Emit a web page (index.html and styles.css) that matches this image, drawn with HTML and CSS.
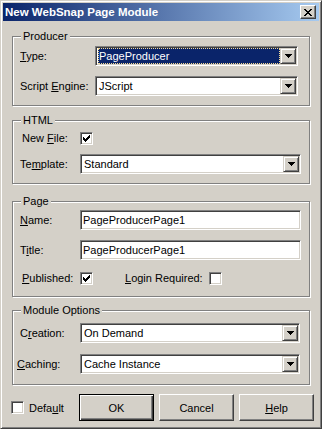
FILE: index.html
```html
<!DOCTYPE html>
<html>
<head>
    <title>New WebSnap Page Module</title>
    <link rel="stylesheet" href="styles.css">
</head>
<body>
    <div class="window">
        <div class="titlebar">
            <span class="title">New WebSnap Page Module</span>
            <span class="close-button">
                <svg width="8" height="7" viewBox="0 0 8 7"><path fill="#000" d="M0 0h2v1H0z M6 0h2v1H6z M1 1h2v1H1z M5 1h2v1H5z M2 2h4v1H2z M3 3h2v1H3z M2 4h4v1H2z M1 5h2v1H1z M5 5h2v1H5z M0 6h2v1H0z M6 6h2v1H6z"/></svg>
            </span>
        </div>

        <div class="content">
            <!-- Producer -->
            <div class="group group-producer">
                <span class="group-title">Producer</span>
                <div class="rows">
                    <div class="row">
                        <span class="label"><u>T</u>ype:</span>
                        <div class="combo">
                            <span class="combo-value"><span class="combo-selected">PageProducer</span></span>
                            <span class="combo-button"><svg width="7" height="4" viewBox="0 0 7 4"><path fill="#000" d="M0 0h7v1h-1v1h-1v1h-1v1h-1v-1h-1v-1h-1v-1h-1z"/></svg></span>
                        </div>
                    </div>
                    <div class="row">
                        <span class="label">Script <u>E</u>ngine:</span>
                        <div class="combo">
                            <span class="combo-value">JScript</span>
                            <span class="combo-button"><svg width="7" height="4" viewBox="0 0 7 4"><path fill="#000" d="M0 0h7v1h-1v1h-1v1h-1v1h-1v-1h-1v-1h-1v-1h-1z"/></svg></span>
                        </div>
                    </div>
                </div>
            </div>

            <!-- HTML -->
            <div class="group group-html">
                <span class="group-title">HTML</span>
                <div class="rows">
                    <div class="row">
                        <span class="label label-shift">New <u>F</u>ile:</span>
                        <span class="checkbox"><svg width="7" height="7" viewBox="0 0 7 7"><path fill="#000" d="M0 2v3h1v1h1v1h1v-1h1v-1h1v-1h1v-1h1v-3h-1v1h-1v1h-1v1h-1v1h-1v-1h-1v-1z"/></svg></span>
                    </div>
                    <div class="row">
                        <span class="label">Te<u>m</u>plate:</span>
                        <div class="combo combo-wide">
                            <span class="combo-value">Standard</span>
                            <span class="combo-button"><svg width="7" height="4" viewBox="0 0 7 4"><path fill="#000" d="M0 0h7v1h-1v1h-1v1h-1v1h-1v-1h-1v-1h-1v-1h-1z"/></svg></span>
                        </div>
                    </div>
                </div>
            </div>

            <!-- Page -->
            <div class="group group-page">
                <span class="group-title">Page</span>
                <div class="rows">
                    <div class="row">
                        <span class="label"><u>N</u>ame:</span>
                        <div class="field">PageProducerPage1</div>
                    </div>
                    <div class="row">
                        <span class="label">T<u>i</u>tle:</span>
                        <div class="field">PageProducerPage1</div>
                    </div>
                    <div class="row row-checks">
                        <span class="label label-shift"><u>P</u>ublished:</span>
                        <span class="checkbox"><svg width="7" height="7" viewBox="0 0 7 7"><path fill="#000" d="M0 2v3h1v1h1v1h1v-1h1v-1h1v-1h1v-1h1v-3h-1v1h-1v1h-1v1h-1v1h-1v-1h-1v-1z"/></svg></span>
                        <span class="login-label"><u>L</u>ogin Required:</span>
                        <span class="checkbox"></span>
                    </div>
                </div>
            </div>

            <!-- Module Options -->
            <div class="group group-module">
                <span class="group-title">Module Options</span>
                <div class="rows">
                    <div class="row">
                        <span class="label">C<u>r</u>eation:</span>
                        <div class="combo">
                            <span class="combo-value">On Demand</span>
                            <span class="combo-button"><svg width="7" height="4" viewBox="0 0 7 4"><path fill="#000" d="M0 0h7v1h-1v1h-1v1h-1v1h-1v-1h-1v-1h-1v-1h-1z"/></svg></span>
                        </div>
                    </div>
                    <div class="row">
                        <span class="label label-back"><u>C</u>aching:</span>
                        <div class="combo">
                            <span class="combo-value">Cache Instance</span>
                            <span class="combo-button"><svg width="7" height="4" viewBox="0 0 7 4"><path fill="#000" d="M0 0h7v1h-1v1h-1v1h-1v1h-1v-1h-1v-1h-1v-1h-1z"/></svg></span>
                        </div>
                    </div>
                </div>
            </div>
        </div>

        <div class="footer">
            <div class="default-option">
                <span class="checkbox"></span>
                <span>Defa<u>u</u>lt</span>
            </div>
            <div class="buttons">
                <span class="button button-default">OK</span>
                <span class="button">Cancel</span>
                <span class="button"><u>H</u>elp</span>
            </div>
        </div>
    </div>
</body>
</html>
```

FILE: styles.css
```css
body {
    font-family: "Liberation Sans", Arial, sans-serif;
    font-size: 11px;
    color: #000000;
    margin: 0;
    background-color: #d4d0c8;
}

.window {
    box-sizing: border-box;
    width: 322px;
    height: 429px;
    padding: 2px;
    border: 1px solid;
    border-color: #d4d0c8 #404040 #404040 #d4d0c8;
    box-shadow: inset 1px 1px 0 #ffffff, inset -1px -1px 0 #808080;
    background-color: #d4d0c8;
    display: flex;
    flex-direction: column;
}

.titlebar {
    height: 18px;
    padding: 0 3px 0 2px;
    display: flex;
    align-items: center;
    background: linear-gradient(to right, #0a246a, #a6caf0);
}

.title {
    flex: 1;
    color: #ffffff;
    font-weight: bold;
    font-size: 11.5px;
    white-space: nowrap;
}

.close-button {
    box-sizing: border-box;
    width: 16px;
    height: 14px;
    border: 1px solid;
    border-color: #ffffff #404040 #404040 #ffffff;
    box-shadow: inset -1px -1px 0 #808080;
    background-color: #d4d0c8;
    display: flex;
    align-items: center;
    justify-content: center;
}

.content {
    padding-left: 9px;
    display: flex;
    flex-direction: column;
}

/* group boxes with the etched frame */
.group {
    box-sizing: border-box;
    width: 298px;
    padding: 0 7px;
    border: 1px solid #808080;
    box-shadow: 1px 1px 0 #ffffff, inset 1px 1px 0 #ffffff;
    display: flex;
    flex-direction: column;
}

.group-title {
    align-self: flex-start;
    line-height: 14px;
    margin: -8px 0 0 1px;
    padding: 0 2px;
    background-color: #d4d0c8;
    white-space: nowrap;
}

.rows {
    display: flex;
    flex-direction: column;
    gap: 10px;
}

.group-producer {
    margin-top: 15px;
}

.group-producer .rows {
    padding: 3px 0 9px;
}

.group-html {
    margin-top: 14px;
}

.group-html .rows {
    padding: 1px 0 9px;
    gap: 6px;
}

.group-page {
    margin-top: 17px;
}

.group-page .rows {
    padding: 2px 0 8px;
}

.group-module {
    margin-top: 13px;
}

.group-module .rows {
    padding: 6px 0 10px;
    gap: 11px;
}

.row {
    height: 20px;
    display: flex;
    align-items: center;
}

.row-checks {
    margin-top: -2px;
}

.label {
    width: 60px;
    flex: none;
    white-space: nowrap;
}

.group-producer .label {
    width: 75px;
}

.label-shift {
    box-sizing: border-box;
    padding-left: 2px;
}

.label-back {
    margin-left: -3px;
    width: 63px;
}

/* sunken fields */
.combo,
.field {
    box-sizing: border-box;
    width: 220px;
    height: 20px;
    padding: 1px;
    border: 1px solid;
    border-color: #808080 #ffffff #ffffff #808080;
    box-shadow: inset 1px 1px 0 #404040, inset -1px -1px 0 #d4d0c8;
    background-color: #ffffff;
    display: flex;
    align-items: center;
}

.group-producer .combo {
    width: 203px;
}

.combo-wide {
    width: 221px;
}

.field {
    width: 221px;
    padding-left: 2px;
    white-space: nowrap;
}

.combo-value {
    flex: 1;
    align-self: stretch;
    display: flex;
    align-items: center;
    padding-left: 2px;
    white-space: nowrap;
}

.combo-selected {
    flex: 1;
    align-self: stretch;
    display: flex;
    align-items: center;
    margin-left: -1px;
    padding-left: 1px;
    background-color: #0a246a;
    color: #ffffff;
    outline: 1px dotted #f5db95;
    outline-offset: -1px;
}

.combo-button {
    box-sizing: border-box;
    width: 16px;
    height: 16px;
    flex: none;
    border: 1px solid;
    border-color: #d4d0c8 #404040 #404040 #d4d0c8;
    box-shadow: inset 1px 1px 0 #ffffff, inset -1px -1px 0 #808080;
    background-color: #d4d0c8;
    display: flex;
    align-items: center;
    justify-content: center;
}

.checkbox {
    box-sizing: border-box;
    width: 13px;
    height: 13px;
    flex: none;
    border: 1px solid;
    border-color: #808080 #ffffff #ffffff #808080;
    box-shadow: inset 1px 1px 0 #404040, inset -1px -1px 0 #d4d0c8;
    background-color: #ffffff;
    display: flex;
    align-items: center;
    justify-content: center;
}

.login-label {
    margin: 0 6px 0 32px;
    white-space: nowrap;
}

.footer {
    margin-top: 9px;
    padding: 0 5px 0 8px;
    display: flex;
    align-items: center;
}

.default-option {
    display: flex;
    align-items: center;
    gap: 5px;
}

.buttons {
    margin-left: auto;
    display: flex;
    gap: 5px;
}

.button {
    box-sizing: border-box;
    width: 75px;
    height: 27px;
    border: 1px solid;
    border-color: #ffffff #404040 #404040 #ffffff;
    box-shadow: inset -1px -1px 0 #808080;
    display: flex;
    align-items: center;
    justify-content: center;
}

.button-default {
    border-color: #000000;
    box-shadow: inset 1px 1px 0 #ffffff, inset -1px -1px 0 #404040, inset -2px -2px 0 #808080;
}
```
